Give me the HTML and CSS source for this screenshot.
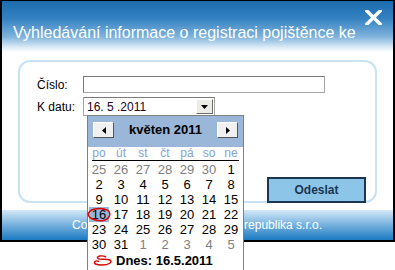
FILE: index.html
```html
<!DOCTYPE html>
<html lang="cs">
<head>
    <meta charset="UTF-8">
    <title>Vyhledávání informace o registraci pojištěnce</title>
    <link rel="stylesheet" href="styles.css">
</head>
<body>
    <div class="window">
        <div class="titleBar">
            <span class="titleText">Vyhledávání informace o registraci pojištěnce ke</span>
            <svg class="closeIcon" width="17" height="15" viewBox="0 0 17 15">
                <path d="M2 1 L15 14 M15 1 L2 14" stroke="#fff" stroke-width="3.4" stroke-linecap="square"/>
            </svg>
        </div>

        <div class="panel">
            <div class="formRow">
                <span class="fieldLabel">Číslo:</span>
                <input class="textField" type="text">
            </div>
            <div class="formRow">
                <span class="fieldLabel">K datu:</span>
                <div class="dateBox">
                    <span class="dateValue">16. 5 .2011</span>
                    <span class="dropButton">
                        <svg width="7" height="4" viewBox="0 0 7 4"><path d="M0 0 H7 L3.5 4 Z" fill="#000"/></svg>
                    </span>

                    <div class="calendar">
                        <div class="calHeader">
                            <span class="navButton">
                                <svg width="4" height="7" viewBox="0 0 4 7"><path d="M4 0 V7 L0 3.5 Z" fill="#000"/></svg>
                            </span>
                            <span class="calTitle">květen 2011</span>
                            <span class="navButton">
                                <svg width="4" height="7" viewBox="0 0 4 7"><path d="M0 0 V7 L4 3.5 Z" fill="#000"/></svg>
                            </span>
                        </div>
                        <div class="dayNamesWrap">
                            <div class="dayNames">
                                <span>po</span><span>út</span><span>st</span><span>čt</span><span>pá</span><span>so</span><span>ne</span>
                            </div>
                        </div>
                        <div class="dayGrid">
                            <span class="other">25</span><span class="other">26</span><span class="other">27</span><span class="other">28</span><span class="other">29</span><span class="other">30</span><span>1</span>
                            <span>2</span><span>3</span><span>4</span><span>5</span><span>6</span><span>7</span><span>8</span>
                            <span>9</span><span>10</span><span>11</span><span>12</span><span>13</span><span>14</span><span>15</span>
                            <span class="selected"><b>16</b>
                                <svg class="todayMark" width="25" height="16" viewBox="0 0 25 16">
                                    <path d="M20 3 C15 0.5, 4 1, 1.5 6 C0 11, 9 14.5, 16 13.5 C22 12.5, 24 8, 22 4.5 C21 3, 18 2, 15 2.5" fill="none" stroke="#e00000" stroke-width="1.5"/>
                                </svg>
                            </span><span>17</span><span>18</span><span>19</span><span>20</span><span>21</span><span>22</span>
                            <span>23</span><span>24</span><span>25</span><span>26</span><span>27</span><span>28</span><span>29</span>
                            <span>30</span><span>31</span><span class="other">1</span><span class="other">2</span><span class="other">3</span><span class="other">4</span><span class="other">5</span>
                        </div>
                        <div class="todayRow">
                            <svg width="20" height="11" viewBox="0 0 20 11">
                                <path d="M13 2 C9 0, 3 1, 5 3.5 C7 5, 14 3.5, 17 5 C20 7, 16 10, 9 10 C3 10, 0 8.5, 2 6.5 C3 5.5, 5 6, 6 6.5" fill="none" stroke="#e00000" stroke-width="1.4"/>
                            </svg>
                            <span>Dnes: 16.5.2011</span>
                        </div>
                    </div>
                </div>
            </div>
            <div class="actions">
                <button class="sendButton">Odeslat</button>
            </div>
        </div>

        <div class="footer">Copyright © 2011 Oracle Česká republika s.r.o.</div>
    </div>
</body>
</html>
```

FILE: styles.css
```css
html{
    height: 270px;
}

body{
    margin: 0;
    height: 270px;
    background-color: #fff;
    font-family: "Liberation Sans", Arial, sans-serif;
    overflow: hidden;
}

.window{
    width: 391px;
    height: 239px;
    border: 2px solid #000;
    border-top: 1px solid #000;
    background-color: #fff;
    display: flex;
    flex-direction: column;
}

.titleBar{
    height: 51px;
    flex-shrink: 0;
    display: flex;
    justify-content: space-between;
    align-items: flex-start;
    background: linear-gradient(to bottom, #1b6cae 0%, #3582c2 35%, #7fb3dc 70%, #d8e9f6 90%, #fff 100%);
}

.titleText{
    color: #fff;
    font-size: 16px;
    padding: 23px 0 0 11px;
}

.closeIcon{
    margin: 9px 11px 0 0;
}

.panel{
    height: 143px;
    box-sizing: border-box;
    margin: 8px 16px 0 16px;
    padding: 14px 9px 0 17px;
    border: 2px solid #c8e2f3;
    border-radius: 12px;
    display: flex;
    flex-direction: column;
}

.formRow{
    display: flex;
    align-items: center;
    margin-bottom: 4px;
}

.fieldLabel{
    width: 46px;
    font-size: 12px;
    color: #000;
}

.textField{
    width: 242px;
    height: 17px;
    box-sizing: border-box;
    margin: 0;
    padding: 0;
    border: 1px solid #a5a5a5;
    border-top-color: #7a7a7a;
    border-left-color: #7a7a7a;
    background-color: #fff;
}

.dateBox{
    position: relative;
    width: 132px;
    height: 19px;
    box-sizing: border-box;
    border: 1px solid #a5a5a5;
    border-top-color: #7a7a7a;
    display: flex;
    align-items: center;
}

.dateValue{
    flex: 1;
    font-size: 12px;
    padding-left: 3px;
    color: #200020;
}

.dropButton{
    width: 17px;
    height: 15px;
    box-sizing: border-box;
    margin-right: 1px;
    background-color: #ecebe6;
    border: 1px solid;
    border-color: #fff #6e6e6e #6e6e6e #fff;
    display: flex;
    align-items: center;
    justify-content: center;
}

.calendar{
    position: absolute;
    left: 3px;
    top: 17px;
    width: 155px;
    border: 1px solid #808080;
    background-color: #fff;
    padding-bottom: 12px;
    z-index: 2;
}

.calHeader{
    height: 31px;
    box-sizing: border-box;
    padding: 6px 5px 0 5px;
    background-color: #9ab7d9;
    display: flex;
    align-items: flex-start;
}

.navButton{
    width: 21px;
    height: 16px;
    box-sizing: border-box;
    background-color: #f0f0f0;
    border: 1px solid;
    border-color: #fff #555 #555 #fff;
    display: flex;
    align-items: center;
    justify-content: center;
}

.calTitle{
    flex: 1;
    text-align: center;
    font-size: 13px;
    font-weight: bold;
    line-height: 16px;
    color: #000;
}

.dayNamesWrap{
    margin: 0 4px;
    border-bottom: 1px solid #000;
}

.dayNames{
    margin: 0 -4px;
    display: grid;
    grid-template-columns: repeat(7, 22px);
    font-size: 12px;
    line-height: 13px;
    color: #86a3cf;
    text-align: center;
}

.dayGrid{
    margin-top: 1px;
    display: grid;
    grid-template-columns: repeat(7, 22px);
    font-size: 13px;
    line-height: 15px;
    text-align: center;
    color: #000;
}

.dayGrid .other{
    color: #808080;
}

.selected{
    position: relative;
}

.selected b{
    display: block;
    font-weight: normal;
    margin: 0 1px;
    background-color: #9ab7d9;
}

.todayMark{
    position: absolute;
    left: -1px;
    top: 0;
}

.todayRow{
    height: 16px;
    padding-left: 5px;
    display: flex;
    align-items: center;
    gap: 3px;
    font-size: 13px;
    font-weight: bold;
    color: #000;
}

.actions{
    margin-top: auto;
    margin-bottom: -2px;
    display: flex;
    justify-content: flex-end;
}

.sendButton{
    width: 99px;
    height: 26px;
    background-color: #8dc5e8;
    border: 2px solid #1b3553;
    font-family: "Liberation Sans", Arial, sans-serif;
    font-size: 12px;
    font-weight: bold;
    color: #1b3553;
}

.footer{
    height: 30px;
    margin-top: auto;
    background: linear-gradient(to bottom, #d4e9f8 0%, #7fb6e0 45%, #1b79c1 100%);
    color: #fff;
    font-size: 12px;
    line-height: 30px;
    padding-left: 70px;
}
```
